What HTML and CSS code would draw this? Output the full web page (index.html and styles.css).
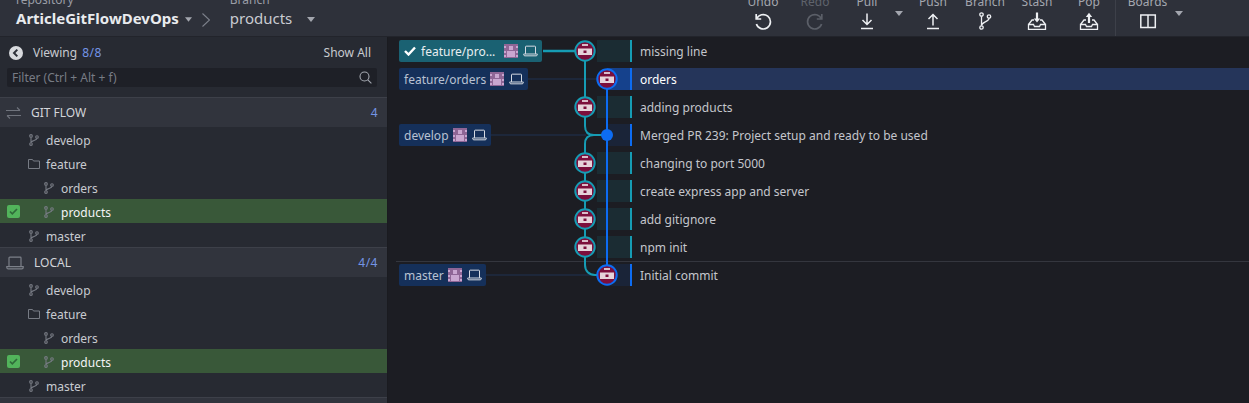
FILE: index.html
```html
<!DOCTYPE html>
<html lang="en">
<head>
  <meta charset="UTF-8">
  <meta name="viewport" content="width=device-width, initial-scale=1.0">
  <title>GitKraken</title>
  <link rel="stylesheet" href="styles.css">
</head>
<body>
  <svg class="defs" width="0" height="0">
    <symbol id="i-branch" viewBox="0 0 10 12">
      <g fill="none" stroke="currentColor" stroke-width="1.100">
        <circle cx="2" cy="1.900" r="1.300"/><circle cx="2" cy="10.100" r="1.300"/><circle cx="8" cy="3" r="1.300"/>
        <path d="M2 3.200v5.600M8 4.300c0 2.500-6 1.800-6 4.500"/>
      </g>
    </symbol>
    <symbol id="i-laptop" viewBox="0 0 18 14">
      <g fill="none" stroke="currentColor" stroke-width="1.200">
        <path d="M3 10.500V2a.8.8 0 0 1 .8-.8h10.400A.8.8 0 0 1 15 2v8.500"/>
        <path d="M.8 10.600h16.400v.8c0 .8-.6 1.400-1.400 1.400H2.200c-.8 0-1.400-.6-1.400-1.400z"/>
      </g>
    </symbol>
    <symbol id="i-avatar" viewBox="0 0 14 14">
      <rect width="14" height="14" fill="#8f6696"/>
      <g fill="#c9a6d0">
        <rect x="5" y="2" width="4" height="4"/><rect x="3" y="7" width="8" height="6"/>
        <rect x="0" y="2" width="2" height="2"/><rect x="12" y="2" width="2" height="2"/>
        <rect x="0" y="7" width="2" height="2"/><rect x="12" y="7" width="2" height="2"/>
        <rect x="0" y="11" width="2" height="2"/><rect x="12" y="11" width="2" height="2"/>
      </g>
    </symbol>
    <symbol id="i-node" viewBox="-10 -10 20 20">
      <circle r="9.500" fill="#7c0f3c"/>
      <rect x="-3" y="-7" width="6" height="2" fill="#d9bcc8"/>
      <rect x="-7" y="-2.500" width="14" height="6.500" fill="#e6d3da"/>
      <rect x="-1.500" y="-.5" width="3" height="2.500" fill="#7c0f3c"/>
    </symbol>
    <symbol id="i-caret" viewBox="0 0 8 5"><path d="M0 0h8L4 5z" fill="currentColor"/></symbol>
  </svg>

  <header class="toolbar">
    <div class="repo-nav">
      <div class="crumb crumb-repo">
        <span class="crumb-label">repository</span>
        <span class="crumb-value crumb-bold">ArticleGitFlowDevOps<svg class="caret caret-repo"><use href="#i-caret"/></svg></span>
      </div>
      <svg class="crumb-sep" width="8" height="14" viewBox="0 0 8 14"><path d="M.5.5L7.500 7 .5 13.500" fill="none" stroke="#7d818b" stroke-width="1.100"/></svg>
      <div class="crumb crumb-branch">
        <span class="crumb-label">Branch</span>
        <span class="crumb-value">products<svg class="caret caret-branch"><use href="#i-caret"/></svg></span>
      </div>
    </div>
    <div class="actions">
      <div class="action">
        <span class="action-label">Undo</span>
        <svg width="20" height="20" viewBox="0 0 20 20" fill="none" stroke="#eef0f3" stroke-width="1.700"><path d="M3.200 3v5h5"/><path d="M3.600 8a7.200 7.200 0 1 1-.2 5"/></svg>
      </div>
      <div class="action action-off">
        <span class="action-label">Redo</span>
        <svg width="20" height="20" viewBox="0 0 20 20" fill="none" stroke="#5b5f68" stroke-width="1.700"><path d="M16.800 3v5h-5"/><path d="M16.400 8a7.200 7.200 0 1 0 .2 5"/></svg>
      </div>
      <div class="action">
        <span class="action-label">Pull</span>
        <svg width="20" height="20" viewBox="0 0 20 20" fill="none" stroke="#eef0f3" stroke-width="1.500"><path d="M10 2.500v11M5.500 9l4.500 4.500L14.500 9M4 17.500h12"/></svg>
      </div>
      <svg class="caret action-caret"><use href="#i-caret"/></svg>
      <div class="action">
        <span class="action-label">Push</span>
        <svg width="20" height="20" viewBox="0 0 20 20" fill="none" stroke="#eef0f3" stroke-width="1.500"><path d="M10 14.500v-11M5.500 8L10 3.500 14.500 8M4 17.500h12"/></svg>
      </div>
      <div class="action">
        <span class="action-label">Branch</span>
        <svg width="20" height="20" viewBox="0 0 12 20" fill="none" stroke="#eef0f3" stroke-width="1.300"><circle cx="2.500" cy="3.500" r="1.700"/><circle cx="2.500" cy="16.500" r="1.700"/><circle cx="10" cy="5.500" r="1.700"/><path d="M2.500 5.200v9.600M10 7.200c0 4-7.500 3.500-7.500 7.600"/></svg>
      </div>
      <div class="action">
        <span class="action-label">Stash</span>
        <svg width="20" height="20" viewBox="0 0 20 20" fill="none" stroke="#eef0f3" stroke-width="1.300"><path d="M1.500 13.500L5 9h2M18.500 13.500L15 9h-2M1.500 13.500v4.800h17v-4.800h-5l-1 2h-5l-1-2z"/><path d="M10 1.500v8" stroke-width="2.200"/><path d="M6.800 7.500h6.400L10 11.500z" fill="#eef0f3" stroke="none"/></svg>
      </div>
      <div class="action">
        <span class="action-label">Pop</span>
        <svg width="20" height="20" viewBox="0 0 20 20" fill="none" stroke="#eef0f3" stroke-width="1.300"><path d="M1.500 13.500L5 9h2M18.500 13.500L15 9h-2M1.500 13.500v4.800h17v-4.800h-5l-1 2h-5l-1-2z"/><path d="M10 12V5" stroke-width="2.200"/><path d="M6.800 6h6.400L10 1.800z" fill="#eef0f3" stroke="none"/></svg>
      </div>
      <div class="action action-boards">
        <span class="action-label">Boards</span>
        <svg width="20" height="20" viewBox="0 0 20 20" fill="none" stroke="#eef0f3" stroke-width="1.500"><rect x="2.800" y="4" width="14.500" height="12.500"/><path d="M10 4v12.500"/></svg>
      </div>
      <svg class="caret action-caret"><use href="#i-caret"/></svg>
    </div>
  </header>

  <div class="workspace">
    <aside class="sidebar">
      <div class="viewing">
        <svg class="back" width="14" height="14" viewBox="0 0 14 14"><circle cx="7" cy="7" r="7" fill="#d8dade"/><path d="M8.300 3.600L5 7l3.300 3.400" fill="none" stroke="#2d3039" stroke-width="2"/></svg>
        <span class="viewing-text">Viewing</span>
        <span class="count">8/8</span>
        <span class="show-all">Show All</span>
      </div>
      <div class="filter">
        <span>Filter (Ctrl + Alt + f)</span>
        <svg width="13" height="13" viewBox="0 0 13 13" fill="none" stroke="#a4a8b0" stroke-width="1.100"><circle cx="5.500" cy="5.500" r="4.500"/><path d="M8.800 8.800l3.600 3.600"/></svg>
      </div>

      <div class="section section-first">
        <svg class="section-icon" width="15" height="12" viewBox="0 0 15 12" fill="none" stroke="#6f737c" stroke-width="1.100"><path d="M0 3.500h14M11 .5l3 3M15 8.500H1M4 11.500l-3-3"/></svg>
        <span class="section-title">GIT FLOW</span>
        <span class="count">4</span>
      </div>
      <div class="tree-row"><svg class="ico-branch"><use href="#i-branch"/></svg>develop</div>
      <div class="tree-row"><svg class="ico-folder" viewBox="0 0 12 10" fill="none" stroke="currentColor"><path d="M.5 9.500V.5h4l1 1.500h6v7.500z"/></svg>feature</div>
      <div class="tree-row tree-nested"><svg class="ico-branch"><use href="#i-branch"/></svg>orders</div>
      <div class="tree-row tree-nested tree-active">
        <span class="check"><svg width="9" height="7" viewBox="0 0 9 7" fill="none" stroke="#2f6b3a" stroke-width="1.700"><path d="M1 3.500l2.300 2.300L8 1"/></svg></span>
        <svg class="ico-branch"><use href="#i-branch"/></svg>products
      </div>
      <div class="tree-row"><svg class="ico-branch"><use href="#i-branch"/></svg>master</div>

      <div class="section">
        <svg class="section-icon" width="18" height="14"><use href="#i-laptop"/></svg>
        <span class="section-title">LOCAL</span>
        <span class="count">4/4</span>
      </div>
      <div class="tree-row"><svg class="ico-branch"><use href="#i-branch"/></svg>develop</div>
      <div class="tree-row"><svg class="ico-folder" viewBox="0 0 12 10" fill="none" stroke="currentColor"><path d="M.5 9.500V.5h4l1 1.500h6v7.500z"/></svg>feature</div>
      <div class="tree-row tree-nested"><svg class="ico-branch"><use href="#i-branch"/></svg>orders</div>
      <div class="tree-row tree-nested tree-active">
        <span class="check"><svg width="9" height="7" viewBox="0 0 9 7" fill="none" stroke="#2f6b3a" stroke-width="1.700"><path d="M1 3.500l2.300 2.300L8 1"/></svg></span>
        <svg class="ico-branch"><use href="#i-branch"/></svg>products
      </div>
      <div class="tree-row"><svg class="ico-branch"><use href="#i-branch"/></svg>master</div>
      <div class="section section-last"></div>
    </aside>

    <main class="graph">
      <div class="row row-teal">
        <div class="refs"><span class="pill pill-current"><svg width="12" height="10" viewBox="0 0 12 10" fill="none" stroke="#fff" stroke-width="2.400"><path d="M1 5l3.500 3.500L11 1.500"/></svg><span class="pill-name pill-cut">feature/pro...</span><svg class="pill-avatar"><use href="#i-avatar"/></svg><svg class="pill-laptop"><use href="#i-laptop"/></svg></span></div>
        <div class="shade"></div>
        <div class="msg">missing line</div>
      </div>
      <div class="row row-blue row-selected">
        <div class="refs"><span class="pill"><span class="pill-name">feature/orders</span><svg class="pill-avatar"><use href="#i-avatar"/></svg><svg class="pill-laptop"><use href="#i-laptop"/></svg></span></div>
        <div class="shade"></div>
        <div class="msg">orders</div>
      </div>
      <div class="row row-teal">
        <div class="refs"></div>
        <div class="shade"></div>
        <div class="msg">adding products</div>
      </div>
      <div class="row row-blue">
        <div class="refs"><span class="pill"><span class="pill-name">develop</span><svg class="pill-avatar"><use href="#i-avatar"/></svg><svg class="pill-laptop"><use href="#i-laptop"/></svg></span></div>
        <div class="shade"></div>
        <div class="msg">Merged PR 239: Project setup and ready to be used</div>
      </div>
      <div class="row row-teal"><div class="refs"></div><div class="shade"></div><div class="msg">changing to port 5000</div></div>
      <div class="row row-teal"><div class="refs"></div><div class="shade"></div><div class="msg">create express app and server</div></div>
      <div class="row row-teal"><div class="refs"></div><div class="shade"></div><div class="msg">add gitignore</div></div>
      <div class="row row-teal row-divided"><div class="refs"></div><div class="shade"></div><div class="msg">npm init</div></div>
      <div class="row row-blue">
        <div class="refs"><span class="pill"><span class="pill-name">master</span><svg class="pill-avatar"><use href="#i-avatar"/></svg><svg class="pill-laptop"><use href="#i-laptop"/></svg></span></div>
        <div class="shade"></div>
        <div class="msg">Initial commit</div>
      </div>

      <!-- commit graph, coordinates are relative to the window -->
      <svg class="graph-lines" width="260" height="260" viewBox="388 37 260 260" fill="none">
        <path d="M528 79H597M490 135H586M485 275H597" stroke="#1f3352"/>
        <path d="M543 51H575" stroke="#169cb4" stroke-width="2.500"/>
        <g stroke="#169cb4" stroke-width="2">
          <path d="M585 51V126c0 6 3 9 9 9h13"/>
          <path d="M597 135h-3c-6 0-9 3-9 9V265c0 6 4 10 10 10h12"/>
        </g>
        <path d="M607 79V275" stroke="#0d6cf2" stroke-width="2"/>
        <circle cx="607" cy="135" r="6" fill="#0d6cf2"/>
        <use href="#i-node" x="575" y="41" width="20" height="20"/>
        <use href="#i-node" x="575" y="97" width="20" height="20"/>
        <use href="#i-node" x="575" y="153" width="20" height="20"/>
        <use href="#i-node" x="575" y="181" width="20" height="20"/>
        <use href="#i-node" x="575" y="209" width="20" height="20"/>
        <use href="#i-node" x="575" y="237" width="20" height="20"/>
        <use href="#i-node" x="597" y="69" width="20" height="20"/>
        <use href="#i-node" x="597" y="265" width="20" height="20"/>
        <g stroke="#169cb4" stroke-width="2">
          <circle cx="585" cy="51" r="9.700"/><circle cx="585" cy="107" r="9.700"/><circle cx="585" cy="163" r="9.700"/>
          <circle cx="585" cy="191" r="9.700"/><circle cx="585" cy="219" r="9.700"/><circle cx="585" cy="247" r="9.700"/>
        </g>
        <g stroke="#0d6cf2" stroke-width="2">
          <circle cx="607" cy="79" r="9.700"/><circle cx="607" cy="275" r="9.700"/>
        </g>
      </svg>
    </main>
  </div>
</body>
</html>
```

FILE: styles.css
```css
* {
  box-sizing: border-box;
}
html, body {
  height: 100%;
}
body {
  margin: 0;
  overflow: hidden;
  background: #1c1d23;
  color: #c8cad0;
  font-family: "Noto Sans", "Open Sans", sans-serif;
  font-size: 12px;
}
.defs {
  position: absolute;
}
svg {
  display: block;
  flex: none;
}

/* toolbar */
.toolbar {
  display: flex;
  justify-content: space-between;
  height: 37px;
  overflow: hidden;
  background: #2e313a;
  border-bottom: 1px solid #22242b;
}
.repo-nav {
  display: flex;
  align-items: flex-end;
  padding-left: 16px;
}
.crumb {
  display: flex;
  flex-direction: column;
  padding-bottom: 6px;
}
.crumb-label {
  color: #9a9da6;
  font-size: 12px;
  line-height: 14px;
}
.crumb-value {
  display: flex;
  align-items: center;
  color: #c9cbd1;
  font-size: 15px;
  line-height: 23px;
}
.crumb-bold {
  color: #e9ebee;
  font-weight: 700;
}
.crumb-sep {
  margin: 0 20px 9px 10px;
}
.caret {
  width: 8px;
  height: 5px;
  color: #a3a6ae;
}
.caret-repo {
  width: 7px;
  margin: 2px 0 0 6px;
}
.caret-branch {
  margin: 2px 0 0 15px;
}
.actions {
  display: flex;
  align-items: flex-end;
  padding-right: 62px;
}
.action {
  display: flex;
  flex-direction: column;
  align-items: center;
  width: 52px;
  padding-bottom: 5px;
}
.action-label {
  color: #a4a7af;
  font-size: 12px;
  line-height: 15px;
  margin-bottom: 2px;
}
.action-off .action-label {
  color: #5f636c;
}
.action-caret {
  align-self: flex-start;
  width: 10px;
  height: 5px;
  margin: 11px 3px 0 1px;
}
.action-boards {
  width: 58px;
  padding-left: 6px;
  border-left: 1px solid #3d4049;
}

/* left panel */
.workspace {
  display: flex;
  height: 366px;
}
.sidebar {
  width: 388px;
  flex: none;
  overflow: hidden;
  background: #272a32;
  border-right: 1px solid #1a1b20;
}
.viewing {
  display: flex;
  align-items: center;
  height: 31px;
  padding: 0 16px 0 9px;
}
.back {
  margin-right: 10px;
}
.viewing-text {
  margin-right: 5px;
}
.count {
  color: #7494e6;
  letter-spacing: .5px;
}
.show-all {
  margin-left: auto;
}
.filter {
  display: flex;
  align-items: center;
  justify-content: space-between;
  height: 19px;
  margin: 0 10px 0 7px;
  padding: 0 5px;
  background: #1e2027;
  border-radius: 2px;
  color: #777b84;
}
.section {
  display: flex;
  align-items: center;
  height: 30px;
  padding: 0 9px 0 6px;
  background: #31343d;
  border-top: 1px solid #3d4049;
  color: #d3d5da;
}
.section-first {
  margin-top: 10px;
}
.section-last {
  height: 6px;
}
.section-icon {
  color: #7c8089;
  margin-right: 10px;
}
.section .count {
  margin-left: auto;
}
.tree-row {
  display: flex;
  align-items: center;
  position: relative;
  height: 24px;
  padding: 2px 0 0 29px;
}
.tree-nested {
  padding-left: 44px;
}
.ico-branch {
  width: 10px;
  height: 12px;
  margin-right: 7px;
  color: #777b84;
}
.ico-folder {
  width: 12px;
  height: 10px;
  margin: 0 6px 0 -1px;
  color: #777b84;
}
.tree-active {
  background: #395839;
  color: #f3f4f6;
}
.check {
  display: flex;
  align-items: center;
  justify-content: center;
  position: absolute;
  left: 7px;
  top: 6px;
  width: 13px;
  height: 13px;
  background: #52b45b;
  border-radius: 2px;
}

/* commit graph */
.graph {
  position: relative;
  flex: 1;
  min-width: 0;
}
.row {
  display: flex;
  height: 28px;
  align-items: stretch;
}
.refs {
  display: flex;
  align-items: center;
  width: 209px;
  padding-left: 11px;
}
.row-blue .refs {
  width: 219px;
}
.pill {
  display: flex;
  align-items: center;
  height: 22px;
  padding: 0 4px 0 5px;
  background: #15305a;
  border-radius: 2px;
  color: #b9c2d2;
}
.pill-current {
  background: #1a6172;
  color: #e8eef0;
}
.pill-current .pill-name {
  margin-left: 5px;
}
.pill-name {
  margin-right: 4px;
}
.pill-cut {
  width: 79px;
  white-space: nowrap;
}
.pill-avatar {
  width: 14px;
  height: 14px;
  margin-right: 5px;
}
.pill-laptop {
  width: 15px;
  height: 12px;
  color: #d5dae2;
}
.shade {
  flex: 1;
  max-width: 35px;
  margin: 3px 0;
  background: #1b2c33;
  border-right: 2px solid #169cb4;
}
.row-blue .shade {
  max-width: 25px;
  background: #1a2438;
  border-right-color: #0d6cf2;
}
.row-selected .shade {
  background: #15418c;
}
.msg {
  flex: 1;
  margin: 3px 0;
  padding-left: 8px;
  line-height: 24px;
  color: #c4c6cc;
}
.row-selected .msg {
  background: #25355a;
  color: #fff;
}
.row-divided {
  position: relative;
}
.row-divided::after {
  content: "";
  position: absolute;
  left: 8px;
  right: 0;
  bottom: -1px;
  border-bottom: 1px solid #34363e;
}
.graph-lines {
  position: absolute;
  left: 0;
  top: 0;
}
```
